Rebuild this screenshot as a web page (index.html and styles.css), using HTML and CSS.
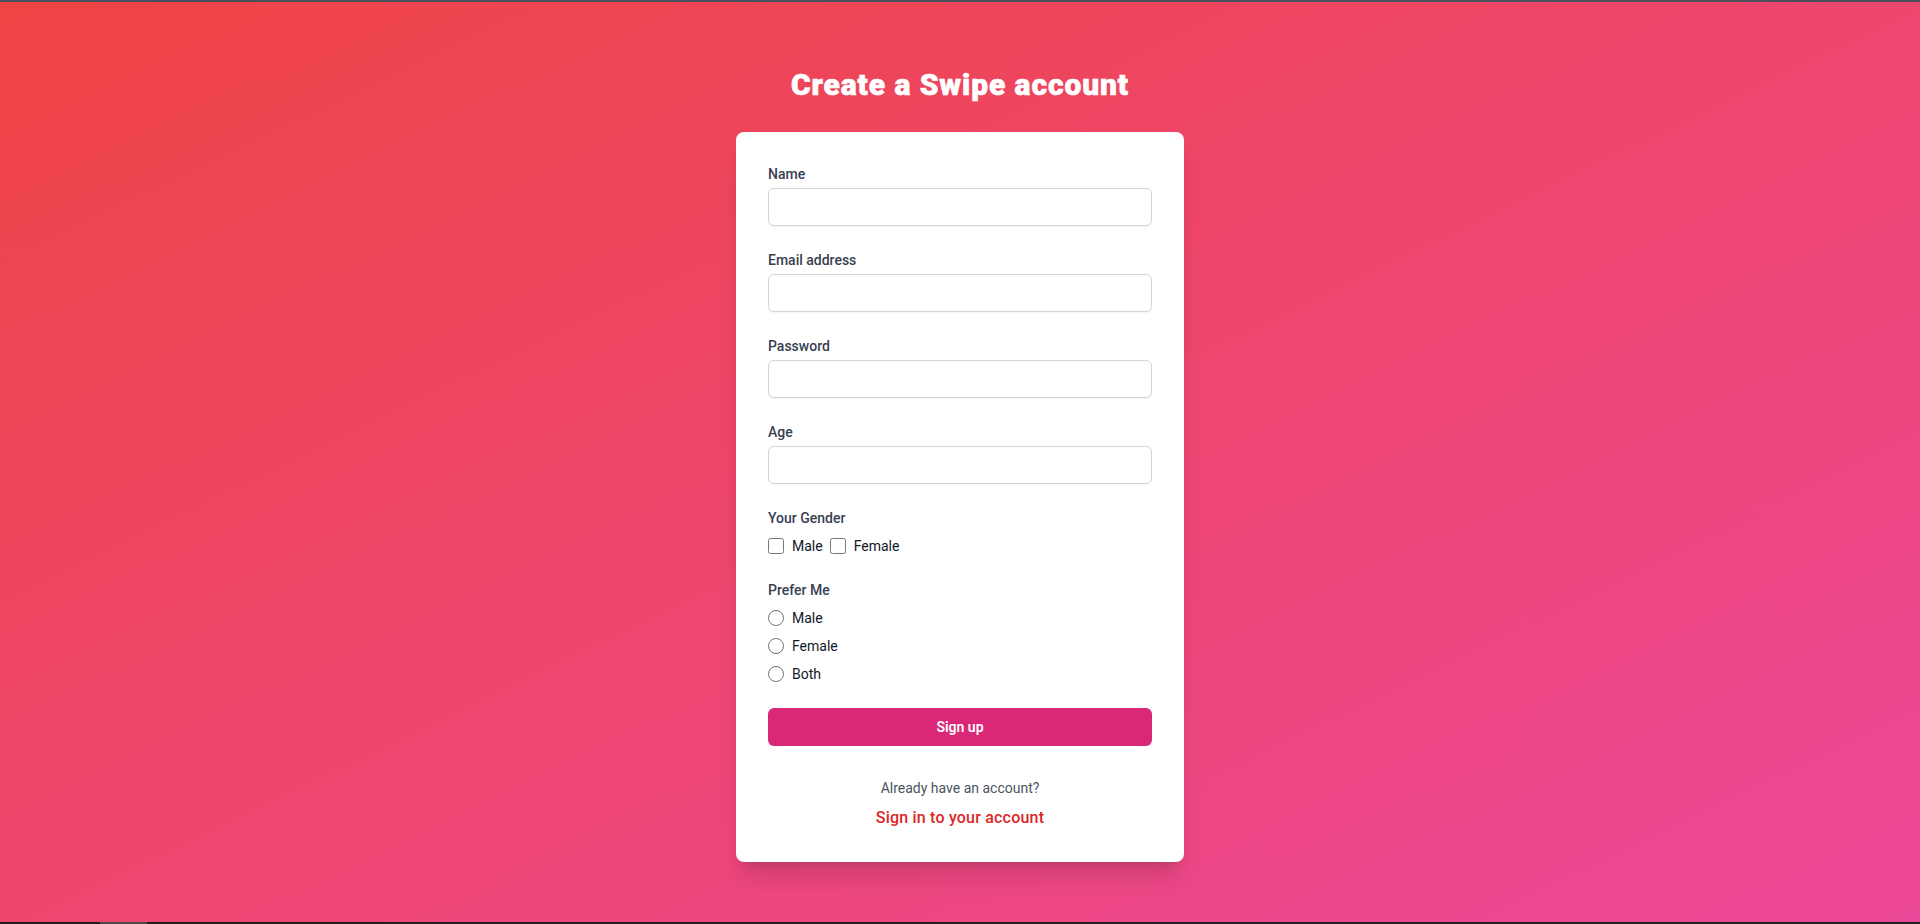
FILE: index.html
```html
<!DOCTYPE html>
<html lang="en">
<head>
<meta charset="utf-8">
<title>Create a Swipe account</title>
<link rel="stylesheet" href="styles.css">
</head>
<body>
<div class="topbar"></div>
<main class="page">
  <h1 class="title">Create a Swipe account</h1>
  <div class="card">
    <form class="form">
      <div class="field">
        <label class="label" for="name">Name</label>
        <input class="input" id="name" type="text">
      </div>
      <div class="field">
        <label class="label" for="email">Email address</label>
        <input class="input" id="email" type="email">
      </div>
      <div class="field">
        <label class="label" for="password">Password</label>
        <input class="input" id="password" type="password">
      </div>
      <div class="field">
        <label class="label" for="age">Age</label>
        <input class="input" id="age" type="number">
      </div>
      <div class="field">
        <span class="label">Your Gender</span>
        <div class="checks">
          <input class="check" id="g-male" type="checkbox">
          <label class="opt" for="g-male">Male</label>
          <input class="check check-next" id="g-female" type="checkbox">
          <label class="opt" for="g-female">Female</label>
        </div>
      </div>
      <div class="field">
        <span class="label">Prefer Me</span>
        <div class="radios">
          <div class="radio-row">
            <input class="radio" id="p-male" name="prefer" type="radio">
            <label class="opt" for="p-male">Male</label>
          </div>
          <div class="radio-row">
            <input class="radio" id="p-female" name="prefer" type="radio">
            <label class="opt" for="p-female">Female</label>
          </div>
          <div class="radio-row">
            <input class="radio" id="p-both" name="prefer" type="radio">
            <label class="opt" for="p-both">Both</label>
          </div>
        </div>
      </div>
      <button class="btn" type="button">Sign up</button>
    </form>
    <div class="footer">
      <p class="muted">Already have an account?</p>
      <a class="link" href="#">Sign in to your account</a>
    </div>
  </div>
</main>
<div class="bottombar"><span class="bottom-thumb"></span></div>
</body>
</html>
```
FILE: styles.css
```css
html, body {
  margin: 0;
  padding: 0;
  height: 100%;
}
body {
  display: flex;
  flex-direction: column;
  min-height: 924px;
  font-family: "Segoe UI", Roboto, "Noto Sans", sans-serif;
  background: linear-gradient(to bottom right, #ef4444, #ec4899);
  overflow: hidden;
}
.topbar {
  height: 2px;
  background: #4b505d;
  flex: none;
}
.bottombar {
  height: 2px;
  background: #1f1f1f;
  flex: none;
  display: flex;
  padding-left: 100px;
}
.bottom-thumb {
  width: 47px;
  background: #4a4a4a;
}
.page {
  flex: 1;
  display: flex;
  flex-direction: column;
  align-items: center;
  padding-top: 65px;
}
.title {
  margin: 0 0 29px;
  font-family: Roboto, "Segoe UI", sans-serif;
  font-size: 30px;
  line-height: 36px;
  font-weight: 900;
  letter-spacing: 0.9px;
  -webkit-text-stroke: 0.6px #ffffff;
  color: #ffffff;
  text-align: center;
}
.card {
  width: 448px;
  box-sizing: border-box;
  padding: 32px;
  background: #ffffff;
  border-radius: 8px;
  box-shadow: 0 20px 25px -5px rgba(0,0,0,0.12), 0 8px 10px -6px rgba(0,0,0,0.1);
}
.form {
  display: flex;
  flex-direction: column;
  gap: 24px;
}
.field {
  display: flex;
  flex-direction: column;
}
.label {
  display: block;
  font-size: 14px;
  line-height: 20px;
  font-weight: 500;
  color: #374151;
}
.input {
  margin: 4px 0 0;
  box-sizing: border-box;
  width: 100%;
  height: 38px;
  padding: 8px 12px;
  border: 1px solid #d1d5db;
  border-radius: 6px;
  box-shadow: 0 1px 2px rgba(0,0,0,0.05);
  font: inherit;
  font-size: 14px;
  background: #fff;
  outline: none;
}
.checks {
  margin-top: 8px;
  display: flex;
  align-items: center;
  height: 20px;
}
.check, .radio {
  width: 16px;
  height: 16px;
  margin: 0;
  flex: none;
}
.check-next {
  margin-left: 7px;
}
.opt {
  margin-left: 8px;
  font-size: 14px;
  line-height: 20px;
  color: #111827;
}
.radios {
  margin-top: 8px;
  display: flex;
  flex-direction: column;
  gap: 8px;
}
.radio-row {
  display: flex;
  align-items: center;
  height: 20px;
}
.btn {
  height: 38px;
  width: 100%;
  border: none;
  border-radius: 6px;
  background: #db2777;
  color: #ffffff;
  font-family: inherit;
  font-size: 14px;
  font-weight: 600;
  cursor: pointer;
}
.footer {
  margin-top: 32px;
  text-align: center;
}
.muted {
  margin: 0;
  font-size: 14px;
  line-height: 20px;
  color: #4b5563;
}
.link {
  display: block;
  margin-top: 8px;
  font-size: 16px;
  line-height: 24px;
  font-weight: 500;
  letter-spacing: 0.2px;
  color: #dc2626;
  text-decoration: none;
}
```
